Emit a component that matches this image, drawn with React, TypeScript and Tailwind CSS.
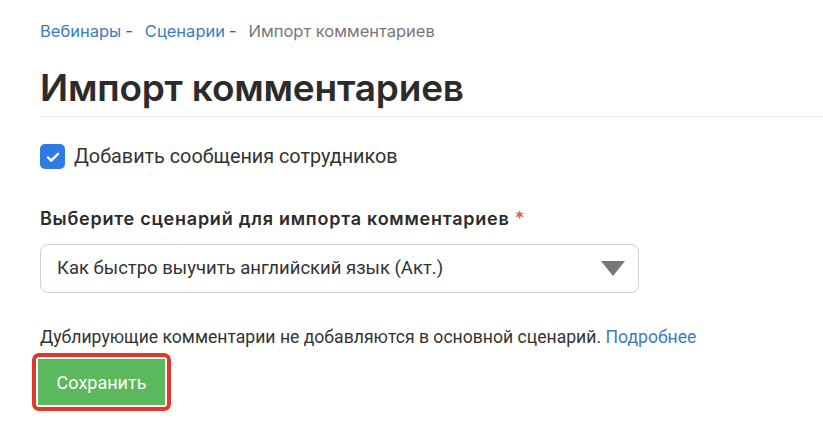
import React, { useState } from "react";

export default function App() {
  const [withStaff, setWithStaff] = useState(true);

  return (
    <div className="min-h-screen bg-white pl-[40px] pt-[21px] text-[#333]">
      {/* Breadcrumbs */}
      <div className="flex items-center text-[16.5px] leading-5 font-['Inter',sans-serif]">
        <a className="text-[#3b7bbf]">Вебинары</a>
        <span className="ml-[4px] mr-[12px] text-[#555]">-</span>
        <a className="text-[#3b7bbf]">Сценарии</a>
        <span className="ml-[4px] mr-[12px] text-[#555]">-</span>
        <span className="text-[#777]">Импорт комментариев</span>
      </div>

      <h1 className="mt-[24px] text-[37px] leading-[46px] font-semibold tracking-[-0.2px] font-['Inter',sans-serif] text-[#2b2b2b]">
        Импорт комментариев
      </h1>
      <div className="mt-[5px] h-px bg-[#ebebeb]" />

      {/* Checkbox */}
      <label className="mt-[27px] flex items-center gap-[9px] font-['Roboto',sans-serif]">
        <span
          onClick={() => setWithStaff(!withStaff)}
          className="flex h-[25px] w-[25px] items-center justify-center rounded-[5px] bg-[#2f7be6]"
        >
          {withStaff && (
            <svg width="16" height="16" viewBox="0 0 16 16" fill="none">
              <path d="M3 8.5l3.2 3.2L13 4.8" stroke="white" strokeWidth="2.4" strokeLinecap="round" strokeLinejoin="round" />
            </svg>
          )}
        </span>
        <span className="text-[19.8px] leading-6 text-[#333]">Добавить сообщения сотрудников</span>
      </label>

      {/* Scenario select */}
      <div className="mt-[38px] text-[18px] leading-6 font-semibold tracking-[0.75px] font-['Inter',sans-serif] text-[#2b2b2b]">
        Выберите сценарий для импорта комментариев <span className="text-[#e8594a]">*</span>
      </div>
      <div className="mt-[13px] flex h-[49px] w-[599px] items-center justify-between rounded-[8px] border border-[#cfcfcf] pl-[16px] pr-[13px] font-['Roboto',sans-serif]">
        <span className="text-[18.5px] text-[#333]">Как быстро выучить английский язык (Акт.)</span>
        <svg width="24" height="15" viewBox="0 0 24 15">
          <path d="M0 0h24L12 15z" fill="#777" />
        </svg>
      </div>

      <p className="mt-[32px] text-[17.6px] leading-6 font-['Roboto',sans-serif] text-[#333]">
        Дублирующие комментарии не добавляются в основной сценарий.{" "}
        <a className="text-[#3b7bbf]">Подробнее</a>
      </p>

      {/* Save button with highlight */}
      <div className="mt-[4px] -ml-[8px] inline-flex rounded-[7px] border-[4px] border-[#e2372b] p-[2px]">
        <button className="h-[46px] w-[127px] bg-[#5cb85c] text-[18px] text-white font-['Roboto',sans-serif]">
          Сохранить
        </button>
      </div>
    </div>
  );
}
